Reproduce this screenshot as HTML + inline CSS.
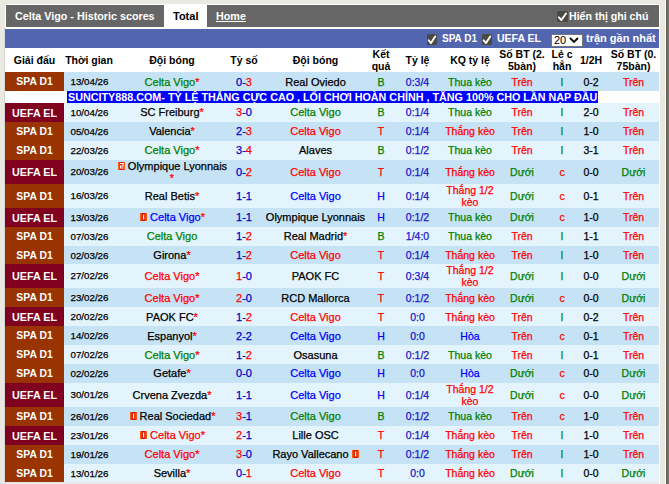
<!DOCTYPE html>
<html><head><meta charset="utf-8"><style>
*{margin:0;padding:0;box-sizing:border-box}
html,body{width:669px;height:484px;overflow:hidden;background:#e9e8e1;font-family:"Liberation Sans",sans-serif}
.a{position:absolute}
.c{position:absolute;display:flex;padding-bottom:2px;align-items:center;justify-content:center;text-align:center;white-space:nowrap}
.hd{font-weight:bold;font-size:10.5px;line-height:11px;color:#000;padding-bottom:0 !important;padding-top:1px}
.lg{font-weight:bold;font-size:10.75px;color:#fff;padding-bottom:0 !important}
.dt{font-size:9.75px;color:#000;padding-bottom:0 !important;padding-left:1px}
.tm{font-size:11px}
.st{color:#ff0000}
.sc{font-size:11px}
.od{font-size:10.5px;color:#1c14c8}
.kq{font-size:10.5px}
.ht{font-size:10.5px;color:#000}
.tm,.sc,.od,.kq,.ht,.dt{-webkit-text-stroke:0.25px currentColor}
.ck{position:absolute;width:11px;height:11px;background:#4a4a44;border-radius:2px}
.card{display:inline-block;width:7px;height:8px;margin-right:3px;margin-left:1px;vertical-align:0px}
</style></head><body><svg width="0" height="0" style="position:absolute"><defs><linearGradient id="cg" x1="0" x2="1" y1="0" y2="0"><stop offset="0" stop-color="#ff6a10"/><stop offset="0.5" stop-color="#d00000"/><stop offset="1" stop-color="#ff6a10"/></linearGradient></defs></svg>
<div class="a" style="left:665px;top:0;width:1px;height:484px;background:#fff"></div>
<div class="a" style="left:666px;top:0;width:1px;height:484px;background:#5a5a52"></div>
<div class="a" style="left:667px;top:0;width:2px;height:484px;background:#74746c"></div>
<div class="a" style="left:4px;top:28px;width:1px;height:456px;background:#d6d6d6"></div>
<div class="a" style="left:659px;top:48px;width:1px;height:436px;background:#d4d4d4"></div>
<div class="a" style="left:5px;top:4px;width:655px;height:480px;background:#fff"></div>
<div class="a" style="left:6px;top:5px;width:653px;height:22px;background:#666"></div>
<div class="a" style="left:15px;top:5px;height:22px;line-height:22px;font-size:10.75px;font-weight:bold;color:#fff;white-space:nowrap">Celta Vigo - Historic scores</div>
<div class="a" style="left:164px;top:5px;width:43px;height:23px;background:#fff"></div>
<div class="a" style="left:173px;top:5px;height:22px;line-height:22px;font-size:11px;font-weight:bold;color:#000">Total</div>
<div class="a" style="left:216px;top:5px;height:22px;line-height:22px;font-size:10.75px;font-weight:bold;color:#fff;text-decoration:underline">Home</div>
<svg class="a" style="left:557px;top:11px" width="11" height="11"><rect x="0" y="0" width="11" height="11" rx="1.5" fill="#4a4a42"/><path d="M1.87 6.38 L4.40 9.02 L9.02 2.42" stroke="#fff" stroke-width="1.9" fill="none" stroke-linecap="round" stroke-linejoin="round"/></svg>
<div class="a" style="left:569px;top:5px;height:22px;line-height:22px;font-size:10.6px;font-weight:bold;color:#fff;white-space:nowrap">Hiển thị ghi chú</div>
<div class="a" style="left:5px;top:29px;width:654px;height:19px;background:#5266b0"></div>
<svg class="a" style="left:427px;top:34px" width="10" height="11"><rect x="0" y="0" width="10" height="11" rx="1.5" fill="#4a4a42"/><path d="M1.70 6.38 L4.00 9.02 L8.20 2.42" stroke="#fff" stroke-width="1.9" fill="none" stroke-linecap="round" stroke-linejoin="round"/></svg>
<div class="a" style="left:442px;top:29px;height:19px;line-height:19px;font-size:10px;font-weight:bold;color:#fff;white-space:nowrap">SPA D1</div>
<svg class="a" style="left:482px;top:34px" width="10" height="11"><rect x="0" y="0" width="10" height="11" rx="1.5" fill="#4a4a42"/><path d="M1.70 6.38 L4.00 9.02 L8.20 2.42" stroke="#fff" stroke-width="1.9" fill="none" stroke-linecap="round" stroke-linejoin="round"/></svg>
<div class="a" style="left:497px;top:29px;height:19px;line-height:19px;font-size:10.5px;font-weight:bold;color:#fff;white-space:nowrap">UEFA EL</div>
<div class="a" style="left:551px;top:34px;width:32px;height:13px;background:#fff;border:1px solid #777"></div>
<div class="a" style="left:554px;top:33px;height:14px;line-height:14px;font-size:11px;color:#000">20</div><svg class="a" style="left:569px;top:37px" width="10" height="6"><path d="M1 1 L5 5 L9 1" stroke="#000" stroke-width="1.8" fill="none"/></svg>
<div class="a" style="left:586px;top:29px;height:19px;line-height:19px;font-size:11px;font-weight:bold;color:#fff;white-space:nowrap">trận gần nhất</div>

<div class="c hd" style="left:5px;top:48px;width:59px;height:24px">Giải đấu</div>
<div class="c hd" style="left:64px;top:48px;width:50px;height:24px">Thời gian</div>
<div class="c hd" style="left:114px;top:48px;width:116px;height:24px">Đội bóng</div>
<div class="c hd" style="left:230px;top:48px;width:28px;height:24px">Tỷ số</div>
<div class="c hd" style="left:258px;top:48px;width:115px;height:24px">Đội bóng</div>
<div class="c hd" style="left:373px;top:48px;width:16px;height:24px"><span style="line-height:12px;position:relative;top:-0.5px">Kết<br>quả</span></div>
<div class="c hd" style="left:389px;top:48px;width:57px;height:24px">Tỷ lệ</div>
<div class="c hd" style="left:446px;top:48px;width:48px;height:24px">KQ tỷ lệ</div>
<div class="c hd" style="left:494px;top:48px;width:56px;height:24px"><span style="line-height:12px;position:relative;top:-0.5px">Số BT (2.<br>5bàn)</span></div>
<div class="c hd" style="left:550px;top:48px;width:24px;height:24px"><span style="line-height:12px;position:relative;top:-0.5px">Lẻ c<br>hẳn</span></div>
<div class="c hd" style="left:574px;top:48px;width:34px;height:24px">1/2H</div>
<div class="c hd" style="left:608px;top:48px;width:51px;height:24px"><span style="line-height:12px;position:relative;top:-0.5px">Số BT (0.<br>75bàn)</span></div>
<div class="a" style="left:64px;top:72px;width:595px;height:19px;background:#c6e3f6"></div>
<div class="c lg" style="left:5px;top:72px;width:59px;height:19px;background:#993300;font-size:10.4px">SPA D1</div>
<div class="c dt" style="left:64px;top:72px;width:50px;height:19px;">13/04/26</div>
<div class="c tm" style="left:114px;top:72px;width:116px;height:19px;;padding-bottom:0"><span style="color:#008000">Celta Vigo</span><span class="st">*</span></div>
<div class="c tm" style="left:258px;top:72px;width:115px;height:19px;;padding-bottom:0"><span style="color:#000">Real Oviedo</span></div>
<div class="c sc" style="left:230px;top:72px;width:28px;height:19px;;padding-bottom:0"><span style="color:#0000c8">0-</span><span style="color:#ff0000">3</span></div>
<div class="c kq" style="left:373px;top:72px;width:16px;height:19px;color:#008000;padding-bottom:0">B</div>
<div class="c od" style="left:389px;top:72px;width:57px;height:19px;;padding-bottom:0">0:3/4</div>
<div class="c kq" style="left:446px;top:72px;width:48px;height:19px;color:#008000;line-height:12px;padding-bottom:0">Thua kèo</div>
<div class="c kq" style="left:494px;top:72px;width:56px;height:19px;color:#ff0000;padding-bottom:0">Trên</div>
<div class="c kq" style="left:550px;top:72px;width:24px;height:19px;color:#008000;padding-bottom:0">l</div>
<div class="c ht" style="left:574px;top:72px;width:34px;height:19px;;padding-bottom:0">0-2</div>
<div class="c kq" style="left:608px;top:72px;width:51px;height:19px;color:#ff0000;padding-bottom:0">Trên</div>
<div class="a" style="left:5px;top:91px;width:654px;height:12px;background:#fff"></div>
<div class="a" style="left:67px;top:91px;width:531px;height:12px;background:#0000ff;overflow:hidden"><div style="position:absolute;left:1px;top:-2px;line-height:16px;font-size:10.78px;font-weight:bold;color:#fff;white-space:nowrap">SUNCITY888.COM- TỶ LỆ THẮNG CỰC CAO , LỐI CHƠI HOÀN CHỈNH , TẶNG 100% CHO LẦN NẠP ĐẦU</div></div>
<div class="a" style="left:64px;top:103px;width:595px;height:19px;background:#e4f4fc"></div>
<div class="c lg" style="left:5px;top:103px;width:59px;height:19px;background:#800020">UEFA EL</div>
<div class="c dt" style="left:64px;top:103px;width:50px;height:19px;">10/04/26</div>
<div class="c tm" style="left:114px;top:103px;width:116px;height:19px;"><span style="color:#000">SC Freiburg</span><span class="st">*</span></div>
<div class="c tm" style="left:258px;top:103px;width:115px;height:19px;"><span style="color:#008000">Celta Vigo</span></div>
<div class="c sc" style="left:230px;top:103px;width:28px;height:19px;"><span style="color:#ff0000">3</span><span style="color:#0000c8">-0</span></div>
<div class="c kq" style="left:373px;top:103px;width:16px;height:19px;color:#008000">B</div>
<div class="c od" style="left:389px;top:103px;width:57px;height:19px;">0:1/4</div>
<div class="c kq" style="left:446px;top:103px;width:48px;height:19px;color:#008000;line-height:12px">Thua kèo</div>
<div class="c kq" style="left:494px;top:103px;width:56px;height:19px;color:#ff0000">Trên</div>
<div class="c kq" style="left:550px;top:103px;width:24px;height:19px;color:#008000">l</div>
<div class="c ht" style="left:574px;top:103px;width:34px;height:19px;">2-0</div>
<div class="c kq" style="left:608px;top:103px;width:51px;height:19px;color:#ff0000">Trên</div>
<div class="a" style="left:64px;top:122px;width:595px;height:19px;background:#c6e3f6"></div>
<div class="c lg" style="left:5px;top:122px;width:59px;height:19px;background:#993300;font-size:10.4px">SPA D1</div>
<div class="c dt" style="left:64px;top:122px;width:50px;height:19px;">05/04/26</div>
<div class="c tm" style="left:114px;top:122px;width:116px;height:19px;"><span style="color:#000">Valencia</span><span class="st">*</span></div>
<div class="c tm" style="left:258px;top:122px;width:115px;height:19px;"><span style="color:#ff0000">Celta Vigo</span></div>
<div class="c sc" style="left:230px;top:122px;width:28px;height:19px;"><span style="color:#0000c8">2-</span><span style="color:#ff0000">3</span></div>
<div class="c kq" style="left:373px;top:122px;width:16px;height:19px;color:#ff0000">T</div>
<div class="c od" style="left:389px;top:122px;width:57px;height:19px;">0:1/4</div>
<div class="c kq" style="left:446px;top:122px;width:48px;height:19px;color:#ff0000;line-height:12px">Thắng kèo</div>
<div class="c kq" style="left:494px;top:122px;width:56px;height:19px;color:#ff0000">Trên</div>
<div class="c kq" style="left:550px;top:122px;width:24px;height:19px;color:#008000">l</div>
<div class="c ht" style="left:574px;top:122px;width:34px;height:19px;">1-0</div>
<div class="c kq" style="left:608px;top:122px;width:51px;height:19px;color:#ff0000">Trên</div>
<div class="a" style="left:64px;top:141px;width:595px;height:19px;background:#e4f4fc"></div>
<div class="c lg" style="left:5px;top:141px;width:59px;height:19px;background:#993300;font-size:10.4px">SPA D1</div>
<div class="c dt" style="left:64px;top:141px;width:50px;height:19px;">22/03/26</div>
<div class="c tm" style="left:114px;top:141px;width:116px;height:19px;"><span style="color:#008000">Celta Vigo</span><span class="st">*</span></div>
<div class="c tm" style="left:258px;top:141px;width:115px;height:19px;"><span style="color:#000">Alaves</span></div>
<div class="c sc" style="left:230px;top:141px;width:28px;height:19px;"><span style="color:#0000c8">3-</span><span style="color:#ff0000">4</span></div>
<div class="c kq" style="left:373px;top:141px;width:16px;height:19px;color:#008000">B</div>
<div class="c od" style="left:389px;top:141px;width:57px;height:19px;">0:1/2</div>
<div class="c kq" style="left:446px;top:141px;width:48px;height:19px;color:#008000;line-height:12px">Thua kèo</div>
<div class="c kq" style="left:494px;top:141px;width:56px;height:19px;color:#ff0000">Trên</div>
<div class="c kq" style="left:550px;top:141px;width:24px;height:19px;color:#008000">l</div>
<div class="c ht" style="left:574px;top:141px;width:34px;height:19px;">3-1</div>
<div class="c kq" style="left:608px;top:141px;width:51px;height:19px;color:#ff0000">Trên</div>
<div class="a" style="left:64px;top:160px;width:595px;height:24px;background:#c6e3f6"></div>
<div class="c lg" style="left:5px;top:160px;width:59px;height:24px;background:#800020">UEFA EL</div>
<div class="c dt" style="left:64px;top:160px;width:50px;height:24px;padding-bottom:2px !important">20/03/26</div>
<div class="c tm" style="left:114px;top:160px;width:116px;height:24px;padding-bottom:2px"><div style="line-height:12px;padding-top:2px"><svg class="card" width="7" height="8"><rect width="7" height="8" fill="url(#cg)"/><path d="M2 1 H5.6 V4.5 H3.1 V5.5 H5.6 V6.6 H2 V3.4 H4.5 V2.1 H2 Z" fill="#fff"/></svg><span style="color:#000">Olympique Lyonnais</span><br><span class="st">*</span></div></div>
<div class="c tm" style="left:258px;top:160px;width:115px;height:24px;;padding-bottom:0"><span style="color:#ff0000">Celta Vigo</span></div>
<div class="c sc" style="left:230px;top:160px;width:28px;height:24px;;padding-bottom:0"><span style="color:#0000c8">0-</span><span style="color:#ff0000">2</span></div>
<div class="c kq" style="left:373px;top:160px;width:16px;height:24px;color:#ff0000;padding-bottom:0">T</div>
<div class="c od" style="left:389px;top:160px;width:57px;height:24px;;padding-bottom:0">0:1/4</div>
<div class="c kq" style="left:446px;top:160px;width:48px;height:24px;color:#ff0000;line-height:12px;padding-bottom:0">Thắng kèo</div>
<div class="c kq" style="left:494px;top:160px;width:56px;height:24px;color:#008000;padding-bottom:0">Dưới</div>
<div class="c kq" style="left:550px;top:160px;width:24px;height:24px;color:#ff0000;padding-bottom:0">c</div>
<div class="c ht" style="left:574px;top:160px;width:34px;height:24px;;padding-bottom:0">0-0</div>
<div class="c kq" style="left:608px;top:160px;width:51px;height:24px;color:#008000;padding-bottom:0">Dưới</div>
<div class="a" style="left:64px;top:184px;width:595px;height:24px;background:#e4f4fc"></div>
<div class="c lg" style="left:5px;top:184px;width:59px;height:24px;background:#993300;font-size:10.4px">SPA D1</div>
<div class="c dt" style="left:64px;top:184px;width:50px;height:24px;padding-bottom:2px !important">16/03/26</div>
<div class="c tm" style="left:114px;top:184px;width:116px;height:24px;;padding-bottom:0"><span style="color:#000">Real Betis</span><span class="st">*</span></div>
<div class="c tm" style="left:258px;top:184px;width:115px;height:24px;;padding-bottom:0"><span style="color:#0000ff">Celta Vigo</span></div>
<div class="c sc" style="left:230px;top:184px;width:28px;height:24px;;padding-bottom:0"><span style="color:#0000c8">1-1</span></div>
<div class="c kq" style="left:373px;top:184px;width:16px;height:24px;color:#0000ff;padding-bottom:0">H</div>
<div class="c od" style="left:389px;top:184px;width:57px;height:24px;;padding-bottom:0">0:1/4</div>
<div class="c kq" style="left:446px;top:184px;width:48px;height:24px;color:#ff0000;line-height:12px;padding-bottom:0">Thắng 1/2<br>kèo</div>
<div class="c kq" style="left:494px;top:184px;width:56px;height:24px;color:#008000;padding-bottom:0">Dưới</div>
<div class="c kq" style="left:550px;top:184px;width:24px;height:24px;color:#ff0000;padding-bottom:0">c</div>
<div class="c ht" style="left:574px;top:184px;width:34px;height:24px;;padding-bottom:0">0-1</div>
<div class="c kq" style="left:608px;top:184px;width:51px;height:24px;color:#ff0000;padding-bottom:0">Trên</div>
<div class="a" style="left:64px;top:208px;width:595px;height:19px;background:#c6e3f6"></div>
<div class="c lg" style="left:5px;top:208px;width:59px;height:19px;background:#800020">UEFA EL</div>
<div class="c dt" style="left:64px;top:208px;width:50px;height:19px;">13/03/26</div>
<div class="c tm" style="left:114px;top:208px;width:116px;height:19px;"><svg class="card" width="7" height="8"><rect width="7" height="8" fill="url(#cg)"/><rect x="3" y="1.5" width="1.2" height="5" fill="#fff"/></svg><span style="color:#0000ff">Celta Vigo</span><span class="st">*</span></div>
<div class="c tm" style="left:258px;top:208px;width:115px;height:19px;"><span style="color:#000">Olympique Lyonnais</span></div>
<div class="c sc" style="left:230px;top:208px;width:28px;height:19px;"><span style="color:#0000c8">1-1</span></div>
<div class="c kq" style="left:373px;top:208px;width:16px;height:19px;color:#0000ff">H</div>
<div class="c od" style="left:389px;top:208px;width:57px;height:19px;">0:1/2</div>
<div class="c kq" style="left:446px;top:208px;width:48px;height:19px;color:#008000;line-height:12px">Thua kèo</div>
<div class="c kq" style="left:494px;top:208px;width:56px;height:19px;color:#008000">Dưới</div>
<div class="c kq" style="left:550px;top:208px;width:24px;height:19px;color:#ff0000">c</div>
<div class="c ht" style="left:574px;top:208px;width:34px;height:19px;">1-0</div>
<div class="c kq" style="left:608px;top:208px;width:51px;height:19px;color:#ff0000">Trên</div>
<div class="a" style="left:64px;top:227px;width:595px;height:19px;background:#e4f4fc"></div>
<div class="c lg" style="left:5px;top:227px;width:59px;height:19px;background:#993300;font-size:10.4px">SPA D1</div>
<div class="c dt" style="left:64px;top:227px;width:50px;height:19px;">07/03/26</div>
<div class="c tm" style="left:114px;top:227px;width:116px;height:19px;"><span style="color:#008000">Celta Vigo</span></div>
<div class="c tm" style="left:258px;top:227px;width:115px;height:19px;"><span style="color:#000">Real Madrid</span><span class="st">*</span></div>
<div class="c sc" style="left:230px;top:227px;width:28px;height:19px;"><span style="color:#0000c8">1-</span><span style="color:#ff0000">2</span></div>
<div class="c kq" style="left:373px;top:227px;width:16px;height:19px;color:#008000">B</div>
<div class="c od" style="left:389px;top:227px;width:57px;height:19px;">1/4:0</div>
<div class="c kq" style="left:446px;top:227px;width:48px;height:19px;color:#008000;line-height:12px">Thua kèo</div>
<div class="c kq" style="left:494px;top:227px;width:56px;height:19px;color:#ff0000">Trên</div>
<div class="c kq" style="left:550px;top:227px;width:24px;height:19px;color:#008000">l</div>
<div class="c ht" style="left:574px;top:227px;width:34px;height:19px;">1-1</div>
<div class="c kq" style="left:608px;top:227px;width:51px;height:19px;color:#ff0000">Trên</div>
<div class="a" style="left:64px;top:246px;width:595px;height:18px;background:#c6e3f6"></div>
<div class="c lg" style="left:5px;top:246px;width:59px;height:18px;background:#993300;font-size:10.4px">SPA D1</div>
<div class="c dt" style="left:64px;top:246px;width:50px;height:18px;">02/03/26</div>
<div class="c tm" style="left:114px;top:246px;width:116px;height:18px;;padding-bottom:0"><span style="color:#000">Girona</span><span class="st">*</span></div>
<div class="c tm" style="left:258px;top:246px;width:115px;height:18px;;padding-bottom:0"><span style="color:#ff0000">Celta Vigo</span></div>
<div class="c sc" style="left:230px;top:246px;width:28px;height:18px;;padding-bottom:0"><span style="color:#0000c8">1-</span><span style="color:#ff0000">2</span></div>
<div class="c kq" style="left:373px;top:246px;width:16px;height:18px;color:#ff0000;padding-bottom:0">T</div>
<div class="c od" style="left:389px;top:246px;width:57px;height:18px;;padding-bottom:0">0:1/4</div>
<div class="c kq" style="left:446px;top:246px;width:48px;height:18px;color:#ff0000;line-height:12px;padding-bottom:0">Thắng kèo</div>
<div class="c kq" style="left:494px;top:246px;width:56px;height:18px;color:#ff0000;padding-bottom:0">Trên</div>
<div class="c kq" style="left:550px;top:246px;width:24px;height:18px;color:#008000;padding-bottom:0">l</div>
<div class="c ht" style="left:574px;top:246px;width:34px;height:18px;;padding-bottom:0">1-0</div>
<div class="c kq" style="left:608px;top:246px;width:51px;height:18px;color:#ff0000;padding-bottom:0">Trên</div>
<div class="a" style="left:64px;top:264px;width:595px;height:24px;background:#e4f4fc"></div>
<div class="c lg" style="left:5px;top:264px;width:59px;height:24px;background:#800020">UEFA EL</div>
<div class="c dt" style="left:64px;top:264px;width:50px;height:24px;padding-bottom:2px !important">27/02/26</div>
<div class="c tm" style="left:114px;top:264px;width:116px;height:24px;;padding-bottom:0"><span style="color:#ff0000">Celta Vigo</span><span class="st">*</span></div>
<div class="c tm" style="left:258px;top:264px;width:115px;height:24px;;padding-bottom:0"><span style="color:#000">PAOK FC</span></div>
<div class="c sc" style="left:230px;top:264px;width:28px;height:24px;;padding-bottom:0"><span style="color:#ff0000">1</span><span style="color:#0000c8">-0</span></div>
<div class="c kq" style="left:373px;top:264px;width:16px;height:24px;color:#ff0000;padding-bottom:0">T</div>
<div class="c od" style="left:389px;top:264px;width:57px;height:24px;;padding-bottom:0">0:3/4</div>
<div class="c kq" style="left:446px;top:264px;width:48px;height:24px;color:#ff0000;line-height:12px;padding-bottom:0">Thắng 1/2<br>kèo</div>
<div class="c kq" style="left:494px;top:264px;width:56px;height:24px;color:#008000;padding-bottom:0">Dưới</div>
<div class="c kq" style="left:550px;top:264px;width:24px;height:24px;color:#008000;padding-bottom:0">l</div>
<div class="c ht" style="left:574px;top:264px;width:34px;height:24px;;padding-bottom:0">0-0</div>
<div class="c kq" style="left:608px;top:264px;width:51px;height:24px;color:#008000;padding-bottom:0">Dưới</div>
<div class="a" style="left:64px;top:288px;width:595px;height:19px;background:#c6e3f6"></div>
<div class="c lg" style="left:5px;top:288px;width:59px;height:19px;background:#993300;font-size:10.4px">SPA D1</div>
<div class="c dt" style="left:64px;top:288px;width:50px;height:19px;">23/02/26</div>
<div class="c tm" style="left:114px;top:288px;width:116px;height:19px;;padding-bottom:0"><span style="color:#ff0000">Celta Vigo</span><span class="st">*</span></div>
<div class="c tm" style="left:258px;top:288px;width:115px;height:19px;;padding-bottom:0"><span style="color:#000">RCD Mallorca</span></div>
<div class="c sc" style="left:230px;top:288px;width:28px;height:19px;;padding-bottom:0"><span style="color:#ff0000">2</span><span style="color:#0000c8">-0</span></div>
<div class="c kq" style="left:373px;top:288px;width:16px;height:19px;color:#ff0000;padding-bottom:0">T</div>
<div class="c od" style="left:389px;top:288px;width:57px;height:19px;;padding-bottom:0">0:1/2</div>
<div class="c kq" style="left:446px;top:288px;width:48px;height:19px;color:#ff0000;line-height:12px;padding-bottom:0">Thắng kèo</div>
<div class="c kq" style="left:494px;top:288px;width:56px;height:19px;color:#008000;padding-bottom:0">Dưới</div>
<div class="c kq" style="left:550px;top:288px;width:24px;height:19px;color:#ff0000;padding-bottom:0">c</div>
<div class="c ht" style="left:574px;top:288px;width:34px;height:19px;;padding-bottom:0">0-0</div>
<div class="c kq" style="left:608px;top:288px;width:51px;height:19px;color:#008000;padding-bottom:0">Dưới</div>
<div class="a" style="left:64px;top:307px;width:595px;height:19px;background:#e4f4fc"></div>
<div class="c lg" style="left:5px;top:307px;width:59px;height:19px;background:#800020">UEFA EL</div>
<div class="c dt" style="left:64px;top:307px;width:50px;height:19px;">20/02/26</div>
<div class="c tm" style="left:114px;top:307px;width:116px;height:19px;;padding-bottom:0"><span style="color:#000">PAOK FC</span><span class="st">*</span></div>
<div class="c tm" style="left:258px;top:307px;width:115px;height:19px;;padding-bottom:0"><span style="color:#ff0000">Celta Vigo</span></div>
<div class="c sc" style="left:230px;top:307px;width:28px;height:19px;;padding-bottom:0"><span style="color:#0000c8">1-</span><span style="color:#ff0000">2</span></div>
<div class="c kq" style="left:373px;top:307px;width:16px;height:19px;color:#ff0000;padding-bottom:0">T</div>
<div class="c od" style="left:389px;top:307px;width:57px;height:19px;;padding-bottom:0">0:0</div>
<div class="c kq" style="left:446px;top:307px;width:48px;height:19px;color:#ff0000;line-height:12px;padding-bottom:0">Thắng kèo</div>
<div class="c kq" style="left:494px;top:307px;width:56px;height:19px;color:#ff0000;padding-bottom:0">Trên</div>
<div class="c kq" style="left:550px;top:307px;width:24px;height:19px;color:#008000;padding-bottom:0">l</div>
<div class="c ht" style="left:574px;top:307px;width:34px;height:19px;;padding-bottom:0">0-2</div>
<div class="c kq" style="left:608px;top:307px;width:51px;height:19px;color:#ff0000;padding-bottom:0">Trên</div>
<div class="a" style="left:64px;top:326px;width:595px;height:19px;background:#c6e3f6"></div>
<div class="c lg" style="left:5px;top:326px;width:59px;height:19px;background:#993300;font-size:10.4px">SPA D1</div>
<div class="c dt" style="left:64px;top:326px;width:50px;height:19px;">14/02/26</div>
<div class="c tm" style="left:114px;top:326px;width:116px;height:19px;;padding-bottom:0"><span style="color:#000">Espanyol</span><span class="st">*</span></div>
<div class="c tm" style="left:258px;top:326px;width:115px;height:19px;;padding-bottom:0"><span style="color:#0000ff">Celta Vigo</span></div>
<div class="c sc" style="left:230px;top:326px;width:28px;height:19px;;padding-bottom:0"><span style="color:#0000c8">2-2</span></div>
<div class="c kq" style="left:373px;top:326px;width:16px;height:19px;color:#0000ff;padding-bottom:0">H</div>
<div class="c od" style="left:389px;top:326px;width:57px;height:19px;;padding-bottom:0">0:0</div>
<div class="c kq" style="left:446px;top:326px;width:48px;height:19px;color:#0000ff;line-height:12px;padding-bottom:0">Hòa</div>
<div class="c kq" style="left:494px;top:326px;width:56px;height:19px;color:#ff0000;padding-bottom:0">Trên</div>
<div class="c kq" style="left:550px;top:326px;width:24px;height:19px;color:#ff0000;padding-bottom:0">c</div>
<div class="c ht" style="left:574px;top:326px;width:34px;height:19px;;padding-bottom:0">0-1</div>
<div class="c kq" style="left:608px;top:326px;width:51px;height:19px;color:#ff0000;padding-bottom:0">Trên</div>
<div class="a" style="left:64px;top:345px;width:595px;height:19px;background:#e4f4fc"></div>
<div class="c lg" style="left:5px;top:345px;width:59px;height:19px;background:#993300;font-size:10.4px">SPA D1</div>
<div class="c dt" style="left:64px;top:345px;width:50px;height:19px;">07/02/26</div>
<div class="c tm" style="left:114px;top:345px;width:116px;height:19px;;padding-bottom:0"><span style="color:#008000">Celta Vigo</span><span class="st">*</span></div>
<div class="c tm" style="left:258px;top:345px;width:115px;height:19px;;padding-bottom:0"><span style="color:#000">Osasuna</span></div>
<div class="c sc" style="left:230px;top:345px;width:28px;height:19px;;padding-bottom:0"><span style="color:#0000c8">1-</span><span style="color:#ff0000">2</span></div>
<div class="c kq" style="left:373px;top:345px;width:16px;height:19px;color:#008000;padding-bottom:0">B</div>
<div class="c od" style="left:389px;top:345px;width:57px;height:19px;;padding-bottom:0">0:1/2</div>
<div class="c kq" style="left:446px;top:345px;width:48px;height:19px;color:#008000;line-height:12px;padding-bottom:0">Thua kèo</div>
<div class="c kq" style="left:494px;top:345px;width:56px;height:19px;color:#ff0000;padding-bottom:0">Trên</div>
<div class="c kq" style="left:550px;top:345px;width:24px;height:19px;color:#008000;padding-bottom:0">l</div>
<div class="c ht" style="left:574px;top:345px;width:34px;height:19px;;padding-bottom:0">0-1</div>
<div class="c kq" style="left:608px;top:345px;width:51px;height:19px;color:#ff0000;padding-bottom:0">Trên</div>
<div class="a" style="left:64px;top:364px;width:595px;height:19px;background:#c6e3f6"></div>
<div class="c lg" style="left:5px;top:364px;width:59px;height:19px;background:#993300;font-size:10.4px">SPA D1</div>
<div class="c dt" style="left:64px;top:364px;width:50px;height:19px;">02/02/26</div>
<div class="c tm" style="left:114px;top:364px;width:116px;height:19px;"><span style="color:#000">Getafe</span><span class="st">*</span></div>
<div class="c tm" style="left:258px;top:364px;width:115px;height:19px;"><span style="color:#0000ff">Celta Vigo</span></div>
<div class="c sc" style="left:230px;top:364px;width:28px;height:19px;"><span style="color:#0000c8">0-0</span></div>
<div class="c kq" style="left:373px;top:364px;width:16px;height:19px;color:#0000ff">H</div>
<div class="c od" style="left:389px;top:364px;width:57px;height:19px;">0:0</div>
<div class="c kq" style="left:446px;top:364px;width:48px;height:19px;color:#0000ff;line-height:12px">Hòa</div>
<div class="c kq" style="left:494px;top:364px;width:56px;height:19px;color:#008000">Dưới</div>
<div class="c kq" style="left:550px;top:364px;width:24px;height:19px;color:#ff0000">c</div>
<div class="c ht" style="left:574px;top:364px;width:34px;height:19px;">0-0</div>
<div class="c kq" style="left:608px;top:364px;width:51px;height:19px;color:#008000">Dưới</div>
<div class="a" style="left:64px;top:383px;width:595px;height:24px;background:#e4f4fc"></div>
<div class="c lg" style="left:5px;top:383px;width:59px;height:24px;background:#800020">UEFA EL</div>
<div class="c dt" style="left:64px;top:383px;width:50px;height:24px;padding-bottom:2px !important">30/01/26</div>
<div class="c tm" style="left:114px;top:383px;width:116px;height:24px;;padding-bottom:0"><span style="color:#000">Crvena Zvezda</span><span class="st">*</span></div>
<div class="c tm" style="left:258px;top:383px;width:115px;height:24px;;padding-bottom:0"><span style="color:#0000ff">Celta Vigo</span></div>
<div class="c sc" style="left:230px;top:383px;width:28px;height:24px;;padding-bottom:0"><span style="color:#0000c8">1-1</span></div>
<div class="c kq" style="left:373px;top:383px;width:16px;height:24px;color:#0000ff;padding-bottom:0">H</div>
<div class="c od" style="left:389px;top:383px;width:57px;height:24px;;padding-bottom:0">0:1/4</div>
<div class="c kq" style="left:446px;top:383px;width:48px;height:24px;color:#ff0000;line-height:12px;padding-bottom:0">Thắng 1/2<br>kèo</div>
<div class="c kq" style="left:494px;top:383px;width:56px;height:24px;color:#008000;padding-bottom:0">Dưới</div>
<div class="c kq" style="left:550px;top:383px;width:24px;height:24px;color:#ff0000;padding-bottom:0">c</div>
<div class="c ht" style="left:574px;top:383px;width:34px;height:24px;;padding-bottom:0">0-0</div>
<div class="c kq" style="left:608px;top:383px;width:51px;height:24px;color:#008000;padding-bottom:0">Dưới</div>
<div class="a" style="left:64px;top:407px;width:595px;height:19px;background:#c6e3f6"></div>
<div class="c lg" style="left:5px;top:407px;width:59px;height:19px;background:#993300;font-size:10.4px">SPA D1</div>
<div class="c dt" style="left:64px;top:407px;width:50px;height:19px;">26/01/26</div>
<div class="c tm" style="left:114px;top:407px;width:116px;height:19px;"><svg class="card" width="7" height="8"><rect width="7" height="8" fill="url(#cg)"/><rect x="3" y="1.5" width="1.2" height="5" fill="#fff"/></svg><span style="color:#000">Real Sociedad</span><span class="st">*</span></div>
<div class="c tm" style="left:258px;top:407px;width:115px;height:19px;"><span style="color:#008000">Celta Vigo</span></div>
<div class="c sc" style="left:230px;top:407px;width:28px;height:19px;"><span style="color:#ff0000">3</span><span style="color:#0000c8">-1</span></div>
<div class="c kq" style="left:373px;top:407px;width:16px;height:19px;color:#008000">B</div>
<div class="c od" style="left:389px;top:407px;width:57px;height:19px;">0:1/2</div>
<div class="c kq" style="left:446px;top:407px;width:48px;height:19px;color:#008000;line-height:12px">Thua kèo</div>
<div class="c kq" style="left:494px;top:407px;width:56px;height:19px;color:#ff0000">Trên</div>
<div class="c kq" style="left:550px;top:407px;width:24px;height:19px;color:#ff0000">c</div>
<div class="c ht" style="left:574px;top:407px;width:34px;height:19px;">1-0</div>
<div class="c kq" style="left:608px;top:407px;width:51px;height:19px;color:#ff0000">Trên</div>
<div class="a" style="left:64px;top:426px;width:595px;height:19px;background:#e4f4fc"></div>
<div class="c lg" style="left:5px;top:426px;width:59px;height:19px;background:#800020">UEFA EL</div>
<div class="c dt" style="left:64px;top:426px;width:50px;height:19px;">23/01/26</div>
<div class="c tm" style="left:114px;top:426px;width:116px;height:19px;"><svg class="card" width="7" height="8"><rect width="7" height="8" fill="url(#cg)"/><rect x="3" y="1.5" width="1.2" height="5" fill="#fff"/></svg><span style="color:#ff0000">Celta Vigo</span><span class="st">*</span></div>
<div class="c tm" style="left:258px;top:426px;width:115px;height:19px;"><span style="color:#000">Lille OSC</span></div>
<div class="c sc" style="left:230px;top:426px;width:28px;height:19px;"><span style="color:#ff0000">2</span><span style="color:#0000c8">-1</span></div>
<div class="c kq" style="left:373px;top:426px;width:16px;height:19px;color:#ff0000">T</div>
<div class="c od" style="left:389px;top:426px;width:57px;height:19px;">0:1/4</div>
<div class="c kq" style="left:446px;top:426px;width:48px;height:19px;color:#ff0000;line-height:12px">Thắng kèo</div>
<div class="c kq" style="left:494px;top:426px;width:56px;height:19px;color:#ff0000">Trên</div>
<div class="c kq" style="left:550px;top:426px;width:24px;height:19px;color:#008000">l</div>
<div class="c ht" style="left:574px;top:426px;width:34px;height:19px;">1-0</div>
<div class="c kq" style="left:608px;top:426px;width:51px;height:19px;color:#ff0000">Trên</div>
<div class="a" style="left:64px;top:445px;width:595px;height:19px;background:#c6e3f6"></div>
<div class="c lg" style="left:5px;top:445px;width:59px;height:19px;background:#993300;font-size:10.4px">SPA D1</div>
<div class="c dt" style="left:64px;top:445px;width:50px;height:19px;">19/01/26</div>
<div class="c tm" style="left:114px;top:445px;width:116px;height:19px;"><span style="color:#ff0000">Celta Vigo</span><span class="st">*</span></div>
<div class="c tm" style="left:258px;top:445px;width:115px;height:19px;"><span style="color:#000">Rayo Vallecano</span><svg class="card" style="margin-right:0;margin-left:3px" width="7" height="8"><rect width="7" height="8" fill="url(#cg)"/><rect x="3" y="1.5" width="1.2" height="5" fill="#fff"/></svg></div>
<div class="c sc" style="left:230px;top:445px;width:28px;height:19px;"><span style="color:#ff0000">3</span><span style="color:#0000c8">-0</span></div>
<div class="c kq" style="left:373px;top:445px;width:16px;height:19px;color:#ff0000">T</div>
<div class="c od" style="left:389px;top:445px;width:57px;height:19px;">0:1/2</div>
<div class="c kq" style="left:446px;top:445px;width:48px;height:19px;color:#ff0000;line-height:12px">Thắng kèo</div>
<div class="c kq" style="left:494px;top:445px;width:56px;height:19px;color:#ff0000">Trên</div>
<div class="c kq" style="left:550px;top:445px;width:24px;height:19px;color:#008000">l</div>
<div class="c ht" style="left:574px;top:445px;width:34px;height:19px;">1-0</div>
<div class="c kq" style="left:608px;top:445px;width:51px;height:19px;color:#ff0000">Trên</div>
<div class="a" style="left:64px;top:464px;width:595px;height:18px;background:#e4f4fc"></div>
<div class="c lg" style="left:5px;top:464px;width:59px;height:18px;background:#993300;font-size:10.4px">SPA D1</div>
<div class="c dt" style="left:64px;top:464px;width:50px;height:18px;">13/01/26</div>
<div class="c tm" style="left:114px;top:464px;width:116px;height:18px;;padding-bottom:0"><span style="color:#000">Sevilla</span><span class="st">*</span></div>
<div class="c tm" style="left:258px;top:464px;width:115px;height:18px;;padding-bottom:0"><span style="color:#ff0000">Celta Vigo</span></div>
<div class="c sc" style="left:230px;top:464px;width:28px;height:18px;;padding-bottom:0"><span style="color:#0000c8">0-</span><span style="color:#ff0000">1</span></div>
<div class="c kq" style="left:373px;top:464px;width:16px;height:18px;color:#ff0000;padding-bottom:0">T</div>
<div class="c od" style="left:389px;top:464px;width:57px;height:18px;;padding-bottom:0">0:0</div>
<div class="c kq" style="left:446px;top:464px;width:48px;height:18px;color:#ff0000;line-height:12px;padding-bottom:0">Thắng kèo</div>
<div class="c kq" style="left:494px;top:464px;width:56px;height:18px;color:#008000;padding-bottom:0">Dưới</div>
<div class="c kq" style="left:550px;top:464px;width:24px;height:18px;color:#008000;padding-bottom:0">l</div>
<div class="c ht" style="left:574px;top:464px;width:34px;height:18px;;padding-bottom:0">0-0</div>
<div class="c kq" style="left:608px;top:464px;width:51px;height:18px;color:#008000;padding-bottom:0">Dưới</div>
<div class="a" style="left:5px;top:482px;width:654px;height:2px;background:#e6e9ea"></div>
</body></html>
